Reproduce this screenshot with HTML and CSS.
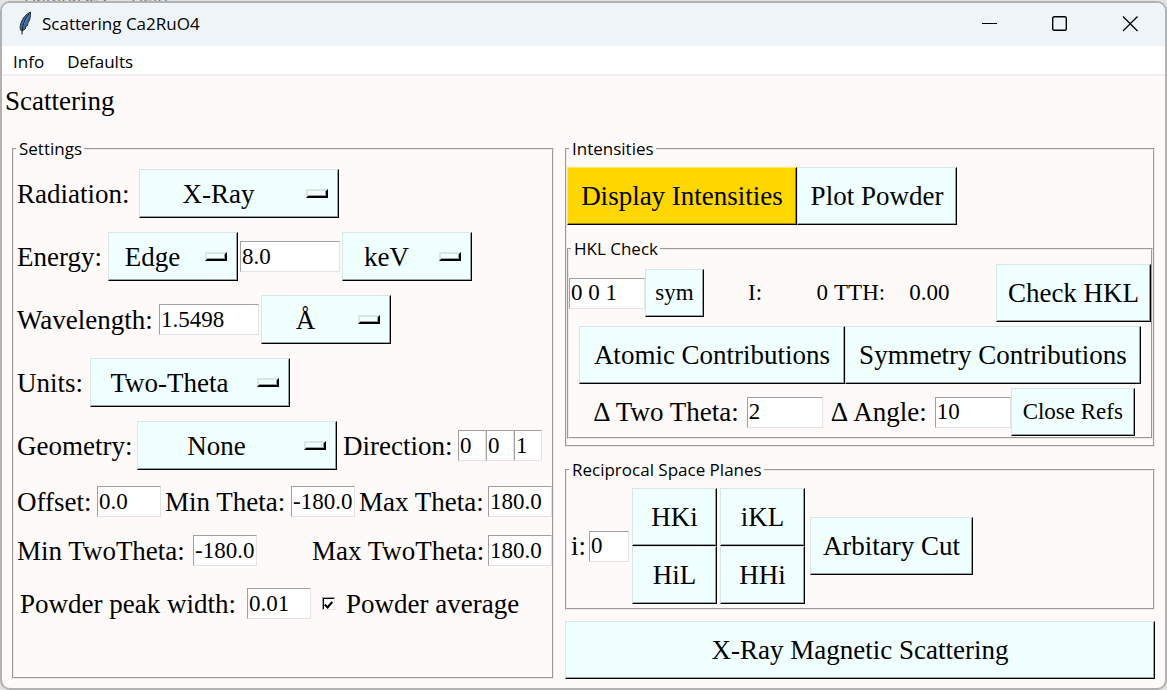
FILE: index.html
```html
<!DOCTYPE html>
<html lang="en">
<head>
<meta charset="utf-8">
<title>Scattering Ca2RuO4</title>
<link rel="stylesheet" href="styles.css">
</head>
<body>
<div class="backdrop" aria-hidden="true"><span>Databases</span><span>Help</span></div>
<main class="window">
  <header class="titlebar">
    <svg class="feather" width="16" height="26" viewBox="0 0 16 26" aria-hidden="true">
      <path d="M12.500 1C8 3 4.500 7 3 12C2 15 2 17 2.500 19L4.500 20L8 17L7 16L10 14L9.500 13L11.500 9C12.500 6 12.500 4 12.500 1Z" fill="#3b6ba5" stroke="#2b3036" stroke-width="1"/>
      <path d="M11 4C8 8 5.500 12 4.500 17" fill="none" stroke="#84b0da" stroke-width="1"/>
      <path d="M11 3C7 8 4 14 4 23.500" fill="none" stroke="#15181c" stroke-width="1"/>
    </svg>
    <h1 class="window-title">Scattering Ca2RuO4</h1>
    <div class="caption-buttons">
      <button class="caption" aria-label="Minimize"><svg width="16" height="16" viewBox="0 0 16 16"><path d="M0 7.500H15" stroke="#000" fill="none"/></svg></button>
      <button class="caption" aria-label="Maximize"><svg width="16" height="16" viewBox="0 0 16 16"><rect x=".7" y=".7" width="13.600" height="13.600" rx="1.500" stroke="#000" stroke-width="1.400" fill="none"/></svg></button>
      <button class="caption" aria-label="Close"><svg width="16" height="16" viewBox="0 0 16 16"><path d="M1 .5L15.500 15M15.500 .5L1 15" stroke="#000" stroke-width="1.300" fill="none"/></svg></button>
    </div>
  </header>
  <nav class="menubar">
    <button class="menu-item">Info</button>
    <button class="menu-item">Defaults</button>
  </nav>
  <h2 class="heading">Scattering</h2>
  <div class="columns">
    <fieldset class="group settings">
      <legend>Settings</legend>
      <div class="rows">
        <div class="row tall">
          <label class="label-radiation" for="radiation">Radiation:</label>
          <span class="picker wide"><select id="radiation"><option>X-Ray</option></select></span>
        </div>
        <div class="row tall">
          <label class="label-energy" for="edge">Energy:</label>
          <span class="picker"><select id="edge"><option>Edge</option></select></span>
          <input class="entry large spaced" type="text" value="8.0" aria-label="Energy value">
          <span class="picker"><select aria-label="Energy unit"><option>keV</option></select></span>
        </div>
        <div class="row tall">
          <label class="label-wavelength" for="wavelength">Wavelength:</label>
          <input class="entry large" id="wavelength" type="text" value="1.5498">
          <span class="picker after-entry"><select aria-label="Wavelength unit"><option>Å</option></select></span>
        </div>
        <div class="row tall">
          <label class="label-units" for="units">Units:</label>
          <span class="picker wide"><select id="units"><option>Two-Theta</option></select></span>
        </div>
        <div class="row tall">
          <label class="label-geometry" for="geometry">Geometry:</label>
          <span class="picker wide"><select id="geometry"><option>None</option></select></span>
          <label class="label-direction" for="direction">Direction:</label>
          <input class="entry tiny" id="direction" type="text" value="0">
          <input class="entry tiny" type="text" value="0" aria-label="Direction k">
          <input class="entry tiny" type="text" value="1" aria-label="Direction l">
        </div>
        <div class="row">
          <label class="label-offset" for="offset">Offset:</label>
          <input class="entry" id="offset" type="text" value="0.0">
          <label class="label-min" for="mintheta">Min Theta:</label>
          <input class="entry" id="mintheta" type="text" value="-180.0">
          <label class="label-max" for="maxtheta">Max Theta:</label>
          <input class="entry" id="maxtheta" type="text" value="180.0">
        </div>
        <div class="row">
          <label class="label-twotheta" for="mintwo">Min TwoTheta:</label>
          <input class="entry" id="mintwo" type="text" value="-180.0">
          <label class="label-twotheta push" for="maxtwo">Max TwoTheta:</label>
          <input class="entry" id="maxtwo" type="text" value="180.0">
        </div>
        <div class="row powder">
          <label class="label-peak" for="peak">Powder peak width:</label>
          <input class="entry" id="peak" type="text" value="0.01">
          <input class="tick" id="average" type="checkbox" checked>
          <label for="average">Powder average</label>
        </div>
      </div>
    </fieldset>
    <div class="right">
      <fieldset class="group intensities">
        <legend>Intensities</legend>
        <div class="row">
          <button class="btn gold display">Display Intensities</button>
          <button class="btn plot">Plot Powder</button>
        </div>
        <fieldset class="group hkl">
          <legend>HKL Check</legend>
          <div class="rows">
            <div class="row">
              <input class="entry medium" type="text" value="0 0 1" aria-label="HKL">
              <button class="btn small">sym</button>
              <span class="readout name">I:</span>
              <output class="readout value">0</output>
              <span class="readout">TTH:</span>
              <output class="readout angle">0.00</output>
              <button class="btn check">Check HKL</button>
            </div>
            <div class="row center">
              <button class="btn atomic">Atomic Contributions</button>
              <button class="btn symmetry">Symmetry Contributions</button>
            </div>
            <div class="row center refs">
              <label class="label-delta" for="dtwo">Δ Two Theta:</label>
              <input class="entry medium" id="dtwo" type="text" value="2">
              <label class="label-delta" for="dangle">Δ Angle:</label>
              <input class="entry medium" id="dangle" type="text" value="10">
              <button class="btn small close-refs">Close Refs</button>
            </div>
          </div>
        </fieldset>
      </fieldset>
      <fieldset class="group planes">
        <legend>Reciprocal Space Planes</legend>
        <div class="row">
          <label class="label-i" for="plane">i:</label>
          <input class="entry short" id="plane" type="text" value="0">
          <div class="plane-grid">
            <button class="btn">HKi</button>
            <button class="btn">iKL</button>
            <button class="btn">HiL</button>
            <button class="btn">HHi</button>
          </div>
          <button class="btn cut">Arbitary Cut</button>
        </div>
      </fieldset>
      <button class="btn magnetic">X-Ray Magnetic Scattering</button>
    </div>
  </div>
</main>
</body>
</html>
```
FILE: styles.css
```css
*, *::before, *::after { box-sizing: border-box; }

body {
  margin: 0;
  padding-top: 1px;
  min-height: 100vh;
  display: flex;
  background: #e2e2e2;
  color: #000;
  font: 27px/34px "Liberation Serif", "Times New Roman", serif;
}

button, input, select { margin: 0; font: inherit; color: inherit; border-radius: 0; }

/* The window behind shows only the feet of its menu texts. */
.backdrop {
  position: absolute;
  top: 0;
  left: 24px;
  height: 3px;
  overflow: hidden;
  display: flex;
  align-items: flex-end;
  gap: 24px;
  color: #777;
  font: 17px/10px "Open Sans", sans-serif;
}

.window {
  position: relative;
  flex: 1;
  min-width: 0;
  border: 2px solid #b2b2b2;
  border-radius: 10px;
  overflow: hidden;
  background: #fffafa;
}

.titlebar {
  display: flex;
  align-items: center;
  height: 43px;
  padding: 0 0 2px 16px;
  background: #eef4f8;
}
.feather { flex: none; margin-right: 8px; }
.window-title { margin: 0; font: 17px/24px "Open Sans", sans-serif; }
.caption-buttons { display: flex; align-self: stretch; margin-left: auto; }
.caption {
  width: 70px;
  padding: 0;
  border: 0;
  background: none;
  display: grid;
  place-items: center;
}

.menubar {
  display: flex;
  gap: 23px;
  height: 30px;
  padding-left: 11px;
  background: #fff;
  border-bottom: 2px solid #f0f0f0;
}
.menu-item {
  padding: 4px 0 0;
  border: 0;
  background: none;
  font: 17px/24px "Open Sans", sans-serif;
}

.heading { margin: 0; padding: 8px 3px; font-size: 27px; font-weight: 400; }

.columns {
  display: grid;
  grid-template-columns: 542fr 590fr;
  gap: 11px;
  padding: 13px 10px 9px;
}
.right { display: flex; flex-direction: column; min-width: 0; }

.group {
  margin: 0;
  padding: 0;
  min-width: 0;
  border: 2px groove #efeaea;
}
.group > legend {
  margin-left: 2px;
  padding: 0 2px 0 3px;
  font: 17px/20px "Open Sans", sans-serif;
}

.row { display: flex; align-items: center; min-height: 35px; }
.row label { flex: none; white-space: nowrap; }
.center { justify-content: center; }
.rows { display: flex; flex-direction: column; gap: 4px; }

.settings .rows { gap: 14px; padding: 10px 0 0 3px; }
.tall { min-height: 49px; }
.powder { margin-top: 4px; padding-left: 3px; }
.push { margin-left: auto; }

.label-radiation { width: 122px; }
.label-energy { width: 91px; }
.label-wavelength { width: 142px; }
.label-units { width: 73px; }
.label-geometry { width: 120px; }
.label-direction { width: 121px; padding-left: 6px; }
.label-offset { width: 80px; }
.label-min { width: 130px; padding-left: 4px; }
.label-max { width: 133px; padding-left: 4px; }
.label-twotheta { width: 176px; }
.label-peak { width: 227px; }
.label-delta { padding: 0 8px; }
.label-i { width: 22px; padding-left: 4px; }

.entry {
  flex: none;
  width: 64px;
  height: 31px;
  padding: 0 0 0 1px;
  border: 1px solid;
  border-color: #a0a0a0 #e3e3e3 #e3e3e3 #a0a0a0;
  background: #fff;
  font-size: 23px;
}
.large { width: 100px; }
.medium { width: 76px; }
.short { width: 40px; }
.tiny { width: 28px; }
.spaced { margin: 0 2px; }

.btn, .picker select {
  border: 1px solid;
  border-color: #d8e6e6 #000 #000 #d8e6e6;
  box-shadow: inset -1px -1px 0 #96a0a0;
  background: #f0ffff;
}
.btn {
  flex: none;
  height: 58px;
  padding: 0;
  text-align: center;
  white-space: nowrap;
}
.gold {
  border-color: #ffe75c #000 #000 #ffe75c;
  box-shadow: inset -1px -1px 0 #a08700;
  background: #ffd700;
}
.small { width: 59px; height: 48px; font-size: 23px; }

.picker { position: relative; flex: none; width: 130px; height: 49px; }
.wide { width: 200px; }
.after-entry { margin-left: 2px; }
.picker select {
  appearance: none;
  width: 100%;
  height: 100%;
  padding: 0 41px 0 0;
  text-align: center;
  text-align-last: center;
}
.picker::after {
  content: "";
  position: absolute;
  top: 20px;
  right: 11px;
  width: 22px;
  height: 9px;
  border: 2px solid;
  border-color: #d8e6e6 #000 #000 #d8e6e6;
  box-shadow: inset -1px -1px 0 #96a0a0;
  pointer-events: none;
}

.tick {
  appearance: none;
  flex: none;
  width: 13px;
  height: 13px;
  margin: 0 11px;
  border: 1px solid;
  border-color: #a0a0a0 #e3e3e3 #e3e3e3 #a0a0a0;
  box-shadow: inset 1px 1px 0 #000;
  background: #fff;
  display: grid;
  place-items: center;
}
.tick:checked::after {
  content: "";
  width: 5px;
  height: 8px;
  border: solid #000;
  border-width: 0 2px 2px 0;
  transform: rotate(42deg);
}

.intensities { padding: 8px 0 6px; }
.display { width: 230px; }
.plot { width: 160px; }
.hkl { margin: 14px 0 0; padding: 5px 0 1px; }
.readout { font-size: 23px; }
.name { margin-left: 44px; }
.value { width: 66px; margin-right: 6px; text-align: right; }
.angle { margin-left: 24px; }
.check { width: 155px; margin-left: auto; }
.atomic { width: 266px; }
.symmetry { width: 296px; }
.close-refs { width: 124px; }

.planes { margin-top: 13px; padding: 8px 0 4px; }
.plane-grid {
  display: grid;
  grid-template-columns: 85px 85px;
  column-gap: 3px;
  margin: 0 5px 0 3px;
}
.cut { width: 163px; }
.magnetic { margin-top: 11px; }
```
